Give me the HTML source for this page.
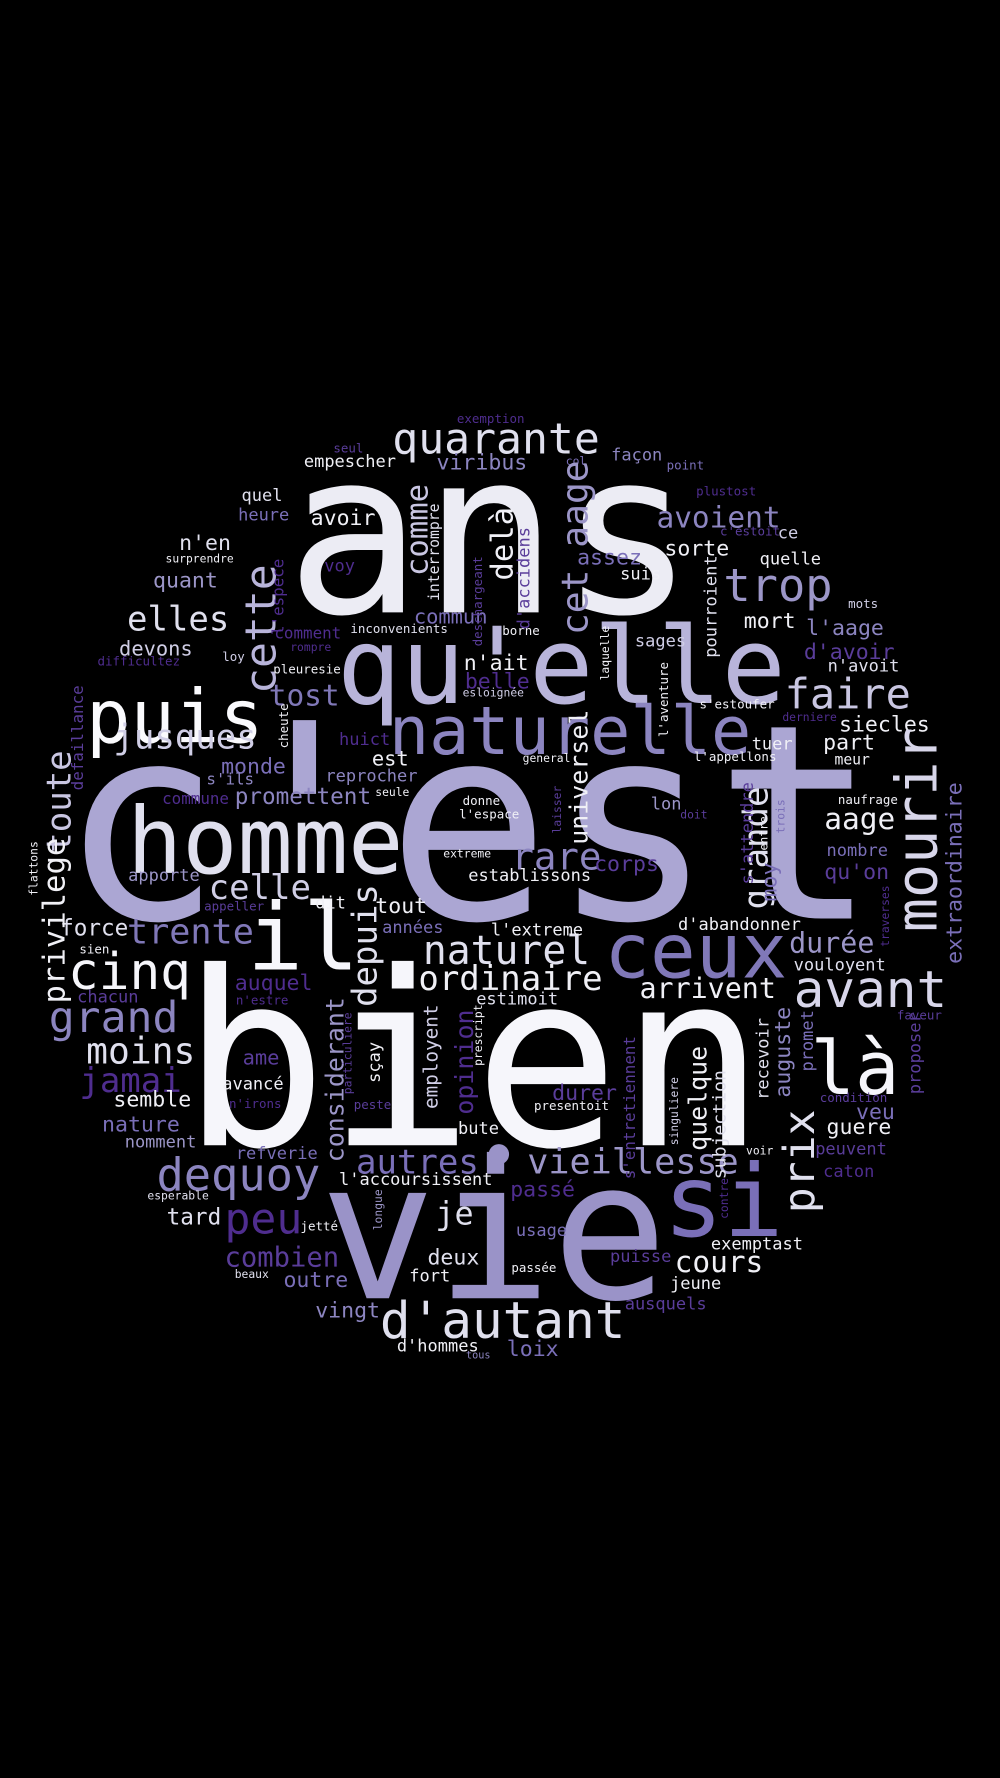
<!DOCTYPE html>
<html><head><meta charset="utf-8"><style>
html,body{margin:0;padding:0;background:#000;width:1000px;height:1778px;overflow:hidden}
svg{display:block}
text{font-family:"DejaVu Sans Mono","Liberation Mono",monospace}
</style></head><body>
<svg width="1000" height="1778" viewBox="0 0 882 1568" xmlns="http://www.w3.org/2000/svg">
<rect width="882" height="1568" fill="#000"/>
<g>
<text x="52" y="810" font-size="240" fill="#aba6d3">c'est</text>
<text x="160" y="1010" font-size="214" fill="#f6f6fb">bien</text>
<text x="282" y="1145" font-size="170" fill="#9a93c8">vie</text>
<text x="252" y="540" font-size="200" fill="#ececf4">ans</text>
<text x="297" y="620" font-size="94" fill="#b8b4da">qu'elle</text>
<text x="112" y="770" font-size="81" fill="#e0e0ee">homme</text>
<text x="76" y="655" font-size="65" fill="#fafafd">puis</text>
<text x="343" y="665" font-size="59" fill="#8c85c0">naturelle</text>
<text x="585" y="1090" font-size="88" fill="#7a6fb8">si</text>
<text x="218" y="855" font-size="82" fill="#f6f6fb">il</text>
<text x="533" y="862" font-size="67" fill="#8078b8">ceux</text>
<text x="700" y="888" font-size="45" fill="#d8d6ea">avant</text>
<text x="715" y="965" font-size="65" fill="#f6f6fb">là</text>
<text x="346" y="400" font-size="38" fill="#e0e0ee">quarante</text>
<text x="638" y="530" font-size="40" fill="#9c96c8">trop</text>
<text x="692" y="625" font-size="37" fill="#c9c6e2">faire</text>
<text x="60" y="872" font-size="45" fill="#f6f6fb">cinq</text>
<text x="43" y="910" font-size="38" fill="#8c85c0">grand</text>
<text x="76" y="938" font-size="32" fill="#e0e0ee">moins</text>
<text x="70" y="963" font-size="30" fill="#4f2d8f">jamai</text>
<text x="100" y="660" font-size="30" fill="#d0cee6">jusques</text>
<text x="112" y="556" font-size="30" fill="#e0e0ee">elles</text>
<text x="138" y="1050" font-size="40" fill="#8c85c0">dequoy</text>
<text x="198" y="1088" font-size="38" fill="#4f2d8f">peu</text>
<text x="198" y="1117" font-size="24" fill="#5a3d9a">combien</text>
<text x="335" y="1180" font-size="45" fill="#e0e0ee">d'autant</text>
<text x="465" y="1035" font-size="31" fill="#9c96c8">vieillesse</text>
<text x="314" y="1035" font-size="30" fill="#7a6fb8">autres</text>
<text x="369" y="873" font-size="30" fill="#f0f0f6">ordinaire</text>
<text x="373" y="850" font-size="35" fill="#e0e0ee">naturel</text>
<text x="564" y="880" font-size="25" fill="#f0f0f6">arrivent</text>
<text x="696" y="840" font-size="25" fill="#9c96c8">durée</text>
<text x="184" y="793" font-size="30" fill="#d0cee6">celle</text>
<text x="112" y="832" font-size="31" fill="#8078b8">trente</text>
<text x="451" y="767" font-size="33" fill="#8c85c0">rare</text>
<text x="579" y="465" font-size="26" fill="#8c85c0">avoient</text>
<text x="727" y="731" font-size="26" fill="#f0f0f6">aage</text>
<text x="595" y="1122" font-size="26" fill="#f0f0f6">cours</text>
<text x="384" y="1080" font-size="28" fill="#e0e0ee">je</text>
<text x="147" y="1080" font-size="20" fill="#e0e0ee">tard</text>
<text x="237" y="622" font-size="26" fill="#8078b8">tost</text>
<text x="195" y="682" font-size="19" fill="#7a6fb8">monde</text>
<text x="207" y="709" font-size="20" fill="#8c85c0">promettent</text>
<text x="143" y="709" font-size="14" fill="#4f2d8f">commune</text>
<text x="182" y="692" font-size="14" fill="#8c85c0">s'ils</text>
<text x="328" y="675" font-size="18" fill="#f0f0f6">est</text>
<text x="287" y="689" font-size="15" fill="#8c85c0">reprocher</text>
<text x="299" y="657" font-size="15" fill="#4f2d8f">huict</text>
<text x="409" y="591" font-size="19" fill="#f0f0f6">n'ait</text>
<text x="410" y="607" font-size="19" fill="#4f2d8f">belle</text>
<text x="365" y="550" font-size="18" fill="#7a6fb8">commun</text>
<text x="242" y="563" font-size="14" fill="#4f2d8f">comment</text>
<text x="309" y="558" font-size="11" fill="#e0e0ee">inconvenients</text>
<text x="105" y="578" font-size="18" fill="#d0cee6">devons</text>
<text x="86" y="587" font-size="11" fill="#4f2d8f">difficultez</text>
<text x="196" y="583" font-size="11" fill="#d0cee6">loy</text>
<text x="241" y="594" font-size="11" fill="#f0f0f6">pleuresie</text>
<text x="256" y="574" font-size="10" fill="#4f2d8f">rompre</text>
<text x="113" y="777" font-size="15" fill="#9c96c8">apporte</text>
<text x="180" y="803" font-size="11" fill="#5a3d9a">appeller</text>
<text x="278" y="801" font-size="15" fill="#f0f0f6">dit</text>
<text x="331" y="805" font-size="19" fill="#f0f0f6">tout</text>
<text x="337" y="823" font-size="15" fill="#7a6fb8">années</text>
<text x="53" y="825" font-size="20" fill="#e0e0ee">force</text>
<text x="70" y="841" font-size="11" fill="#f0f0f6">sien</text>
<text x="68" y="884" font-size="15" fill="#5a3d9a">chacun</text>
<text x="207" y="873" font-size="19" fill="#4f2d8f">auquel</text>
<text x="208" y="886" font-size="11" fill="#4f2d8f">n'estre</text>
<text x="214" y="939" font-size="18" fill="#5a3d9a">ame</text>
<text x="196" y="961" font-size="15" fill="#f0f0f6">avancé</text>
<text x="202" y="977" font-size="11" fill="#4f2d8f">n'irons</text>
<text x="100" y="976" font-size="19" fill="#f0f0f6">semble</text>
<text x="90" y="998" font-size="19" fill="#7a6fb8">nature</text>
<text x="110" y="1012" font-size="15" fill="#9c96c8">nomment</text>
<text x="312" y="978" font-size="11" fill="#5a3d9a">peste</text>
<text x="208" y="1022" font-size="15" fill="#7a6fb8">refverie</text>
<text x="130" y="1058" font-size="10" fill="#e0e0ee">esperable</text>
<text x="299" y="1045" font-size="15" fill="#f0f0f6">l'accoursissent</text>
<text x="450" y="1055" font-size="19" fill="#4f2d8f">passé</text>
<text x="455" y="1090" font-size="15" fill="#7a6fb8">usage</text>
<text x="265" y="1085" font-size="11" fill="#f0f0f6">jetté</text>
<text x="377" y="1115" font-size="19" fill="#e0e0ee">deux</text>
<text x="361" y="1130" font-size="15" fill="#f0f0f6">fort</text>
<text x="250" y="1135" font-size="19" fill="#7a6fb8">outre</text>
<text x="207" y="1127" font-size="10" fill="#e0e0ee">beaux</text>
<text x="278" y="1162" font-size="19" fill="#8c85c0">vingt</text>
<text x="350" y="1192" font-size="15" fill="#f0f0f6">d'hommes</text>
<text x="411" y="1198" font-size="9" fill="#8c85c0">tous</text>
<text x="447" y="1196" font-size="19" fill="#7a6fb8">loix</text>
<text x="451" y="1122" font-size="11" fill="#f0f0f6">passée</text>
<text x="538" y="1113" font-size="15" fill="#5a3d9a">puisse</text>
<text x="627" y="1102" font-size="15" fill="#f0f0f6">exemptast</text>
<text x="591" y="1137" font-size="15" fill="#f0f0f6">jeune</text>
<text x="551" y="1155" font-size="15" fill="#5a3d9a">ausquels</text>
<text x="404" y="1000" font-size="15" fill="#f0f0f6">bute</text>
<text x="487" y="970" font-size="19" fill="#5a3d9a">durer</text>
<text x="471" y="979" font-size="11" fill="#f0f0f6">presentoit</text>
<text x="420" y="886" font-size="15" fill="#e0e0ee">estimoit</text>
<text x="413" y="777" font-size="15" fill="#f0f0f6">establissons</text>
<text x="524" y="768" font-size="19" fill="#5a3d9a">corps</text>
<text x="433" y="825" font-size="15" fill="#f0f0f6">l'extreme</text>
<text x="598" y="820" font-size="15" fill="#f0f0f6">d'abandonner</text>
<text x="391" y="756" font-size="10" fill="#f0f0f6">extreme</text>
<text x="408" y="710" font-size="11" fill="#f0f0f6">donne</text>
<text x="405" y="722" font-size="11" fill="#f0f0f6">l'espace</text>
<text x="331" y="702" font-size="10" fill="#f0f0f6">seule</text>
<text x="461" y="672" font-size="10" fill="#f0f0f6">general</text>
<text x="574" y="714" font-size="15" fill="#9c96c8">lon</text>
<text x="600" y="722" font-size="10" fill="#5a3d9a">doit</text>
<text x="612" y="671" font-size="11" fill="#f0f0f6">l'appellons</text>
<text x="617" y="625" font-size="11" fill="#f0f0f6">s'estoufer</text>
<text x="408" y="614" font-size="10" fill="#d0cee6">esloignée</text>
<text x="443" y="560" font-size="11" fill="#f0f0f6">borne</text>
<text x="560" y="570" font-size="15" fill="#d0cee6">sages</text>
<text x="656" y="554" font-size="19" fill="#f0f0f6">mort</text>
<text x="711" y="560" font-size="19" fill="#8c85c0">l'aage</text>
<text x="709" y="581" font-size="19" fill="#5a3d9a">d'avoir</text>
<text x="730" y="592" font-size="15" fill="#e0e0ee">n'avoit</text>
<text x="748" y="536" font-size="11" fill="#d0cee6">mots</text>
<text x="690" y="636" font-size="10" fill="#4f2d8f">derniere</text>
<text x="740" y="645" font-size="19" fill="#f0f0f6">siecles</text>
<text x="663" y="661" font-size="15" fill="#f0f0f6">tuer</text>
<text x="726" y="661" font-size="19" fill="#f0f0f6">part</text>
<text x="736" y="674" font-size="13" fill="#f0f0f6">meur</text>
<text x="739" y="709" font-size="11" fill="#f0f0f6">naufrage</text>
<text x="729" y="755" font-size="15" fill="#7a6fb8">nombre</text>
<text x="727" y="775" font-size="19" fill="#5a3d9a">qu'on</text>
<text x="700" y="856" font-size="15" fill="#e0e0ee">vouloyent</text>
<text x="755" y="987" font-size="19" fill="#7a6fb8">veu</text>
<text x="723" y="972" font-size="11" fill="#5a3d9a">condition</text>
<text x="729" y="1000" font-size="19" fill="#f0f0f6">guere</text>
<text x="719" y="1018" font-size="15" fill="#5a3d9a">peuvent</text>
<text x="726" y="1038" font-size="15" fill="#4f2d8f">caton</text>
<text x="658" y="1018" font-size="10" fill="#f0f0f6">voir</text>
<text x="791" y="899" font-size="11" fill="#5a3d9a">faveur</text>
<text x="586" y="490" font-size="19" fill="#f0f0f6">sorte</text>
<text x="670" y="498" font-size="15" fill="#f0f0f6">quelle</text>
<text x="686" y="475" font-size="15" fill="#d0cee6">ce</text>
<text x="635" y="472" font-size="11" fill="#5a3d9a">c'estoit</text>
<text x="614" y="437" font-size="11" fill="#4f2d8f">plustost</text>
<text x="588" y="414" font-size="11" fill="#7a6fb8">point</text>
<text x="539" y="406" font-size="15" fill="#8c85c0">façon</text>
<text x="499" y="410" font-size="10" fill="#7a6fb8">col</text>
<text x="403" y="373" font-size="11" fill="#4f2d8f">exemption</text>
<text x="294" y="399" font-size="11" fill="#5a3d9a">seul</text>
<text x="268" y="412" font-size="15" fill="#f0f0f6">empescher</text>
<text x="385" y="414" font-size="19" fill="#8c85c0">viribus</text>
<text x="213" y="442" font-size="15" fill="#e0e0ee">quel</text>
<text x="210" y="459" font-size="15" fill="#7a6fb8">heure</text>
<text x="274" y="463" font-size="19" fill="#f0f0f6">avoir</text>
<text x="158" y="485" font-size="19" fill="#e0e0ee">n'en</text>
<text x="146" y="496" font-size="10" fill="#f0f0f6">surprendre</text>
<text x="135" y="518" font-size="19" fill="#9c96c8">quant</text>
<text x="286" y="504" font-size="15" fill="#4f2d8f">voy</text>
<text x="509" y="498" font-size="19" fill="#7a6fb8">assez</text>
<text x="547" y="511" font-size="15" fill="#f0f0f6">suis</text>
</g>
<g>
<text transform="translate(826,822) rotate(-90)" font-size="50" fill="#d8d6ea">mourir</text>
<text transform="translate(243,612) rotate(-90)" font-size="38" fill="#b8b4da">cette</text>
<text transform="translate(62,752) rotate(-90)" font-size="30" fill="#c9c6e2">toute</text>
<text transform="translate(57,885) rotate(-90)" font-size="27" fill="#f0f0f6">privilege</text>
<text transform="translate(73,697) rotate(-90)" font-size="14" fill="#5a3d9a">defaillance</text>
<text transform="translate(33,790) rotate(-90)" font-size="10" fill="#f0f0f6">flattons</text>
<text transform="translate(254,660) rotate(-90)" font-size="11" fill="#f0f0f6">cheute</text>
<text transform="translate(250,560) rotate(-90)" font-size="14" fill="#4f2d8f">l'espece</text>
<text transform="translate(332,888) rotate(-90)" font-size="30" fill="#e0e0ee">depuis</text>
<text transform="translate(303,1025) rotate(-90)" font-size="22" fill="#9c96c8">considerant</text>
<text transform="translate(417,983) rotate(-90)" font-size="22" fill="#4f2d8f">opinion</text>
<text transform="translate(386,978) rotate(-90)" font-size="17" fill="#d0cee6">employent</text>
<text transform="translate(335,955) rotate(-90)" font-size="15" fill="#f0f0f6">sçay</text>
<text transform="translate(310,965) rotate(-90)" font-size="10" fill="#5a3d9a">particuliere</text>
<text transform="translate(425,940) rotate(-90)" font-size="10" fill="#f0f0f6">prescript</text>
<text transform="translate(677,802) rotate(-90)" font-size="30" fill="#e0e0ee">grande</text>
<text transform="translate(518,560) rotate(-90)" font-size="32" fill="#9c96c8">cet aage</text>
<text transform="translate(452,512) rotate(-90)" font-size="27" fill="#f0f0f6">delà</text>
<text transform="translate(377,508) rotate(-90)" font-size="27" fill="#c9c6e2">comme</text>
<text transform="translate(387,530) rotate(-90)" font-size="13" fill="#e0e0ee">interrompre</text>
<text transform="translate(467,555) rotate(-90)" font-size="15" fill="#5a3d9a">d'accidens</text>
<text transform="translate(425,570) rotate(-90)" font-size="11" fill="#5a3d9a">deschargeant</text>
<text transform="translate(518,745) rotate(-90)" font-size="22" fill="#f0f0f6">universel</text>
<text transform="translate(495,735) rotate(-90)" font-size="10" fill="#5a3d9a">laisser</text>
<text transform="translate(537,600) rotate(-90)" font-size="10" fill="#f0f0f6">laquelle</text>
<text transform="translate(589,650) rotate(-90)" font-size="11" fill="#f0f0f6">l'aventure</text>
<text transform="translate(632,580) rotate(-90)" font-size="15" fill="#e0e0ee">pourroient</text>
<text transform="translate(664,780) rotate(-90)" font-size="15" fill="#5a3d9a">s'attendre</text>
<text transform="translate(685,795) rotate(-90)" font-size="19" fill="#7a6fb8">moy</text>
<text transform="translate(677,750) rotate(-90)" font-size="10" fill="#f0f0f6">entre</text>
<text transform="translate(692,735) rotate(-90)" font-size="10" fill="#7a6fb8">trois</text>
<text transform="translate(848,850) rotate(-90)" font-size="19" fill="#7a6fb8">extraordinaire</text>
<text transform="translate(784,835) rotate(-90)" font-size="10" fill="#4f2d8f">traverses</text>
<text transform="translate(718,1070) rotate(-90)" font-size="38" fill="#e0e0ee">prix</text>
<text transform="translate(697,968) rotate(-90)" font-size="19" fill="#8c85c0">auguste</text>
<text transform="translate(717,945) rotate(-90)" font-size="15" fill="#7a6fb8">promet</text>
<text transform="translate(812,965) rotate(-90)" font-size="15" fill="#5a3d9a">proposer</text>
<text transform="translate(678,970) rotate(-90)" font-size="15" fill="#e0e0ee">recevoir</text>
<text transform="translate(623,1015) rotate(-90)" font-size="22" fill="#f0f0f6">quelque</text>
<text transform="translate(640,1040) rotate(-90)" font-size="16" fill="#e0e0ee">subjection</text>
<text transform="translate(598,1010) rotate(-90)" font-size="10" fill="#d0cee6">singuliere</text>
<text transform="translate(560,1040) rotate(-90)" font-size="14" fill="#5a3d9a">s'entretiennent</text>
<text transform="translate(642,1075) rotate(-90)" font-size="10" fill="#4f2d8f">contre</text>
<text transform="translate(337,1085) rotate(-90)" font-size="10" fill="#9c96c8">longue</text>
</g>
<circle cx="440" cy="1018" r="9" fill="#9a93c8"/>
</svg>
</body></html>
